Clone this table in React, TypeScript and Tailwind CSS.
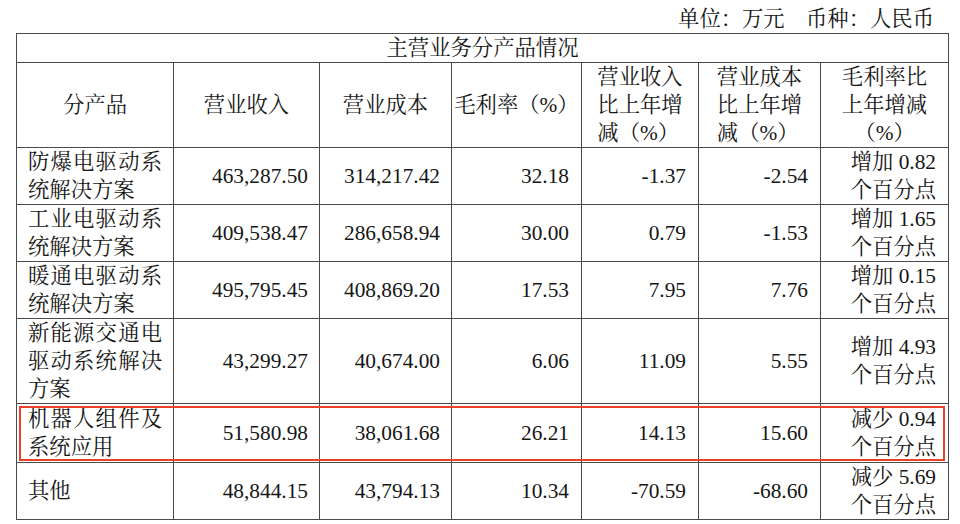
import React from "react";

type Row = {
  name: string;
  rev: string;
  cost: string;
  gm: string;
  revc: string;
  costc: string;
  gmc: [string, string];
  highlight?: boolean;
};

const rows: Row[] = [
  { name: "防爆电驱动系统解决方案", rev: "463,287.50", cost: "314,217.42", gm: "32.18", revc: "-1.37", costc: "-2.54", gmc: ["增加 0.82", "个百分点"] },
  { name: "工业电驱动系统解决方案", rev: "409,538.47", cost: "286,658.94", gm: "30.00", revc: "0.79", costc: "-1.53", gmc: ["增加 1.65", "个百分点"] },
  { name: "暖通电驱动系统解决方案", rev: "495,795.45", cost: "408,869.20", gm: "17.53", revc: "7.95", costc: "7.76", gmc: ["增加 0.15", "个百分点"] },
  { name: "新能源交通电驱动系统解决方案", rev: "43,299.27", cost: "40,674.00", gm: "6.06", revc: "11.09", costc: "5.55", gmc: ["增加 4.93", "个百分点"] },
  { name: "机器人组件及系统应用", rev: "51,580.98", cost: "38,061.68", gm: "26.21", revc: "14.13", costc: "15.60", gmc: ["减少 0.94", "个百分点"], highlight: true },
  { name: "其他", rev: "48,844.15", cost: "43,794.13", gm: "10.34", revc: "-70.59", costc: "-68.60", gmc: ["减少 5.69", "个百分点"] },
];

const cell = "border border-[#4a4a4a] p-0 align-middle leading-[28px]";

export default function App() {
  return (
    <div
      className="w-[960px] h-[524px] bg-white text-[#161616] overflow-hidden"
      style={{ fontFamily: '"Liberation Serif", "Noto Serif CJK SC", "Noto Sans CJK SC", serif' }}
    >
      <div className="text-[21.33px] leading-[28px] pt-[5px] pr-[26px] text-right">
        单位：万元　币种：人民币
      </div>
      <table className="ml-[16px] w-[932px] border-collapse table-fixed text-[21.33px]">
        <colgroup>
          <col className="w-[157px]" />
          <col className="w-[146px]" />
          <col className="w-[132px]" />
          <col className="w-[130px]" />
          <col className="w-[117px]" />
          <col className="w-[122px]" />
          <col className="w-[128px]" />
        </colgroup>
        <tbody>
          <tr>
            <td colSpan={7} className={`${cell} text-center`}>
              主营业务分产品情况
            </td>
          </tr>
          <tr>
            <td className={`${cell} text-center`}>分产品</td>
            <td className={`${cell} text-center`}>营业收入</td>
            <td className={`${cell} text-center`}>营业成本</td>
            <td className={`${cell} text-center`}>毛利率（%）</td>
            <td className={`${cell} text-center`}>
              <span className="inline-block text-left">
                营业收入
                <br />
                比上年增
                <br />
                减（%）
              </span>
            </td>
            <td className={`${cell} text-center`}>
              <span className="inline-block text-left">
                营业成本
                <br />
                比上年增
                <br />
                减（%）
              </span>
            </td>
            <td className={`${cell} text-center`}>
              毛利率比
              <br />
              上年增减
              <br />
              （%）
            </td>
          </tr>
          {rows.map((r) => (
            <tr key={r.name} className={r.highlight ? "relative" : ""}>
              <td className={`${cell} px-[11px] text-justify ${r.highlight ? "py-[1px]" : ""}`}>
                {r.name}
                {r.highlight && (
                  <div className="absolute left-[2px] right-[4px] top-[2px] bottom-[2px] border-2 border-[#e8412c] pointer-events-none" />
                )}
              </td>
              <td className={`${cell} pr-[11px] text-right`}>{r.rev}</td>
              <td className={`${cell} pr-[11px] text-right`}>{r.cost}</td>
              <td className={`${cell} pr-[12px] text-right`}>{r.gm}</td>
              <td className={`${cell} pr-[12px] text-right`}>{r.revc}</td>
              <td className={`${cell} pr-[12px] text-right`}>{r.costc}</td>
              <td className={`${cell} pr-[12px] text-right`}>
                {r.gmc[0]}
                <br />
                {r.gmc[1]}
              </td>
            </tr>
          ))}
        </tbody>
      </table>
    </div>
  );
}
